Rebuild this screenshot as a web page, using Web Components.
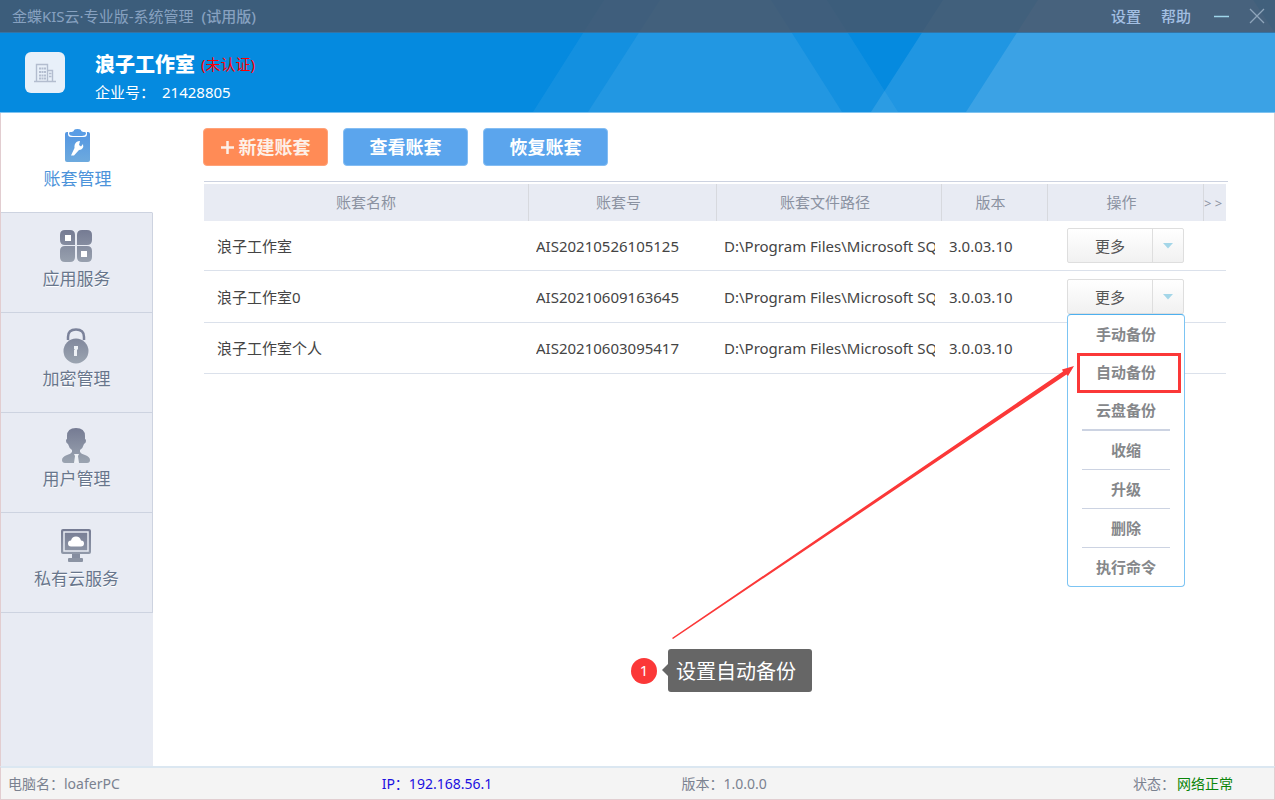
<!DOCTYPE html>
<html lang="zh-CN">
<head>
<meta charset="utf-8">
<title>金蝶KIS云·专业版-系统管理</title>
<style>
html, body { margin: 0; height: 100%; }
body { font-family: "Noto Sans", "Noto Sans CJK SC", sans-serif; font-size: 15px; line-height: 20px; color: #444; background: #fff; }
</style>
</head>
<body>
<app-window>
  <top-banner slot="top" company="浪子工作室" state="(未认证)" code="21428805">
    <title-bar slot="title"></title-bar>
  </top-banner>
  <side-nav slot="side">
    <nav-item active>
      <svg slot="icon" width="26" height="34" viewBox="0 0 26 34" aria-hidden="true">
        <defs><linearGradient id="b" x2="0" y2="1"><stop stop-color="#5496e2"/><stop offset="1" stop-color="#6daade"/></linearGradient></defs>
        <rect y="3" width="25" height="30" rx="2" fill="url(#b)"/>
        <path d="M3 2h19v3q0 3-3 3H6q-3 0-3-3z" fill="#fff"/>
        <path d="M5 3q4 0 4-2 1-1 3.500-1t3.500 1q0 2 4 2 1 0 1 2-1 2-4 2H8Q5 7 4 5q0-2 1-2z" fill="#5a9de5"/>
        <path d="M15 12l-1 4 2 1.500 2-2.500q1 3-1 5-1.500 1-3 1L9 26.500H6L9.500 19q-.5-4 2-6 1.500-1 3.500-1z" fill="#fff"/>
      </svg>账套管理</nav-item>
    <nav-item>
      <svg slot="icon" width="32" height="32" viewBox="0 0 32 32" aria-hidden="true">
        <defs><linearGradient id="g" gradientUnits="userSpaceOnUse" x1="0" y1="0" x2="0" y2="34"><stop stop-color="#757b93"/><stop offset="1" stop-color="#9aa3b0"/></linearGradient></defs>
        <g fill="url(#g)" fill-rule="evenodd">
          <path d="M5 0h5q5 0 5 5v10H5q-5 0-5-5V5q0-5 5-5zM5 5v6h6V5z"/>
          <path d="M22 0h5q5 0 5 5v5q0 5-5 5H17V5q0-5 5-5z"/>
          <path d="M5 16h10v11q0 5-5 5H5q-5 0-5-5v-6q0-5 5-5z"/>
          <path d="M17 16h10q5 0 5 5v6q0 5-5 5h-5q-5 0-5-5zM21 21v6h6v-6z"/>
        </g>
        <path d="M5 5h6v6H5zM21 21h6v6h-6z" fill="#fff"/>
      </svg>应用服务</nav-item>
    <nav-item>
      <svg slot="icon" width="26" height="36" viewBox="0 0 26 36" aria-hidden="true">
        <path d="M5 12V9Q5 1.500 13 1.500T21 9v3" fill="none" stroke="#7b829a" stroke-width="2.500"/>
        <circle cx="13" cy="23" r="12.500" fill="url(#g)"/>
        <path d="M11 18h4v3l-1 1v6h-3v-6h1l-1-1z" fill="#eef1f6"/>
      </svg>加密管理</nav-item>
    <nav-item>
      <svg slot="icon" width="28" height="36" viewBox="0 0 28 36" aria-hidden="true">
        <path d="M14 0q9 0 9 8v3q1 0 1 2t-2 3q-1 4-4 6v2q1 2 5 3 5 2 5 5 0 3-3 3H3q-3 0-3-3 0-3 5-5 4-1 5-3v-2q-3-2-4-6-2-1-2-3t1-2V8q0-8 9-8z" fill="url(#g)"/>
        <path d="M12 26h5l-1 2 1 7h-5l1-7z" fill="#eef1f6"/>
      </svg>用户管理</nav-item>
    <nav-item>
      <svg slot="icon" width="30" height="34" viewBox="0 0 30 34" aria-hidden="true">
        <rect width="30" height="25" rx="2" fill="url(#g)"/>
        <rect x="3" y="3" width="24" height="19" fill="none" stroke="#e8ebf3" stroke-width="1.500"/>
        <path d="M10 17.500q-3 0-3-3t3-3q1-4 5-4t5 4q3 0 3 3t-3 3z" fill="#fff"/>
        <path d="M11 25h8v4h-8z" fill="#858d9f"/><rect x="7" y="29" width="15" height="4" rx="1" fill="#8b93a3"/>
      </svg>私有云服务</nav-item>
  </side-nav>
  <account-panel slot="main"></account-panel>
  <status-bar slot="foot"></status-bar>
</app-window>

<script>
const define = (name, html, init) => {
  const t = document.createElement('template');
  t.innerHTML = html;
  customElements.define(name, class extends HTMLElement {
    constructor() {
      super();
      this.attachShadow({ mode: 'open' }).append(t.content.cloneNode(true));
    }
    connectedCallback() { if (init) init(this, this.shadowRoot); }
  });
};
const RESET = '*{box-sizing:border-box} button{font:inherit;color:inherit;margin:0;padding:0;border:0;background:none;cursor:pointer}';

define('app-window', `<style>${RESET}
  :host{display:flex;flex-direction:column;min-height:100vh;background:#fff;box-sizing:border-box}
  .body{flex:1;display:flex;border:solid #e2cdd0;border-width:0 1px}
  main{flex:1;min-width:0;display:flex}
</style>
<slot name="top"></slot>
<div class="body"><slot name="side"></slot><main><slot name="main"></slot></main></div>
<slot name="foot"></slot>`);

define('title-bar', `<style>${RESET}
  :host{display:flex;align-items:center;height:33px;padding:0 10px 0 12px;box-sizing:border-box;background:rgba(75,81,96,.79);border-bottom:1px solid #3673a3;color:#87a1c0}
  .name{flex:1;white-space:nowrap} b{font-weight:500;margin-left:8px}
  nav{display:flex;align-items:center;gap:20px;color:#a3bfe2;font-weight:500}
  svg{display:block} .min{margin-left:3px}
</style>
<div class="name">金蝶KIS云·专业版-系统管理<b>(试用版)</b></div>
<nav><button>设置</button><button>帮助</button>
<button class="min" aria-label="最小化"><svg width="15" height="16"><path d="M0 8.500h15" stroke="#9fd6ea" stroke-width="1.500"/></svg></button>
<button aria-label="关闭"><svg width="16" height="16"><path d="M1 1l14 14M15 1L1 15" stroke="#8fa5bb" stroke-width="1.300"/></svg></button></nav>`);

define('top-banner', `<style>${RESET}
  :host{display:block;position:relative;background:#058adf;border-bottom:1px solid #7fc3f0}
  .deco{position:absolute;inset:0;width:100%;height:100%}
  .over{position:relative}
  .row{display:flex;gap:30px;height:79px;padding:19px 25px 0;color:#fff}
  .logo{width:40px;height:41px;border-radius:6px;background:#e8f0f9;display:grid;place-items:center}
  h1{margin:0;font-size:20px;line-height:26px;font-weight:700;display:flex;gap:6px;align-items:center}
  h1 span{font-size:15px;line-height:20px;font-weight:400;color:#f00;padding-bottom:2px}
  p{margin:4px 0 0;line-height:20px} p span{margin-left:7px}
</style>
<svg class="deco" viewBox="0 0 1275 112" preserveAspectRatio="xMaxYMid slice" fill="#fff" aria-hidden="true">
  <path d="M604 0H827L898 112H533z" fill-opacity=".06"/>
  <path d="M660 0H771L842 112H588z" fill-opacity=".065"/>
  <path d="M943 0H1275V112H871z" fill-opacity=".11"/>
  <path d="M1038 0H1253L1275 33V112H966z" fill-opacity=".12"/>
</svg>
<div class="over"><slot name="title"></slot>
<div class="row"><div class="logo"><svg width="22" height="20" viewBox="0 0 22 20" fill="none" stroke="#b3bdcf" aria-hidden="true">
  <path d="M2.500 18V1.500h11V18M13.500 7.500h5V18M0 18.500h22" stroke-width="1.400"/>
  <path d="M5 5.500h7M5 9h7M5 12.500h7M5 15.500h7" stroke-width="2" stroke-dasharray="2 .5"/>
  <path d="M15 10.500h2.500M15 13.500h2.500" stroke-width="1.500"/></svg></div>
<div><h1><b id="c"></b><span id="s"></span></h1><p>企业号：<span id="n"></span></p></div></div></div>`,
(el, r) => {
  r.getElementById('c').textContent = el.getAttribute('company');
  r.getElementById('s').textContent = el.getAttribute('state');
  r.getElementById('n').textContent = el.getAttribute('code');
});

define('side-nav', `<style>:host{display:block;width:152px;flex:none;background:#e8ebf3}</style><nav><slot></slot></nav>`);

define('nav-item', `<style>${RESET}
  :host{display:block}
  a{display:flex;flex-direction:column;align-items:center;height:100px;padding-top:13px;border:solid #cdd3e0;border-width:0 1px 1px 0;background:#e8ebf3;color:#68768c;font-size:17px;line-height:24px;text-decoration:none;text-shadow:0 1px #fff}
  .i{height:40px;display:flex;align-items:center;margin-bottom:1px;padding-right:2px}
  :host([active]) a{background:#fff;color:#4c93da;border-right-color:#fff;padding-left:2px}
  :host([active]) .i{padding-right:0}
</style><a href="#"><span class="i"><slot name="icon"></slot></span><span><slot></slot></span></a>`);

define('kis-button', `<style>${RESET}
  :host{display:block}
  button{width:125px;height:38px;border-radius:4px;background:#5ba5ed;border:1px solid #84bdf3;color:#fff;font-size:18px;font-weight:700;line-height:24px;display:flex;align-items:center;justify-content:center;gap:5px}
  :host([primary]) button{background:#ff8b56;border-color:#ffa279;color:#fdf0e8}
  svg{display:none} :host([primary]) svg{display:block}
</style><button><svg width="13" height="13" aria-hidden="true"><path d="M6.500 0v13M0 6.500h13" stroke="#fdf0e8" stroke-width="2.500"/></svg><slot></slot></button>`);

define('split-button', `<style>${RESET}
  :host{display:block;position:relative;width:117px}
  .g{display:flex;height:35px;border:1px solid #dedede;border-radius:2px;background:linear-gradient(#fff,#f1f1f1)}
  .m{flex:1;color:#555;line-height:20px} .d{width:31px;border-left:1px solid #dedede;display:grid;place-items:center}
  ::slotted(*){position:absolute;top:35px;left:0;z-index:2}
</style><div class="g"><button class="m">更多</button><button class="d" aria-label="展开"><svg width="10" height="6"><path d="M0 0h10L5 5.500z" fill="#a4d6e8"/></svg></button></div><slot></slot>`);

define('action-menu', `<style>${RESET}
  :host{display:block;width:118px;border:1px solid #7cc4f3;border-top-color:#4db0ef;border-radius:4px;background:#fff;box-sizing:border-box}
  ul{list-style:none;margin:0;padding:0 14px}
  li{position:relative}
  button{display:block;width:100%;height:38px;font-weight:700;color:#85878a;line-height:20px;white-space:nowrap}
  .sep{border-bottom:1px solid #ccd3e2} .group{border-bottom:2px solid #ccd3e2}
  .mark::after{content:"";position:absolute;inset:0 -11px -2px -5px;border:3px solid #fb3838;pointer-events:none}
</style><ul><li><button>手动备份</button></li><li class="mark"><button>自动备份</button></li><li class="group"><button>云盘备份</button></li>
<li class="sep"><button>收缩</button></li><li class="sep"><button>升级</button></li><li class="sep"><button>删除</button></li><li><button>执行命令</button></li></ul>`);

define('step-callout', `<style>${RESET}
  :host{display:block;width:443px;height:326px;pointer-events:none}
  svg{position:absolute;inset:0}
  .c{position:absolute;left:0;bottom:0;display:flex;align-items:center;gap:11px;color:#fff}
  .n{width:26px;height:26px;border-radius:50%;background:#fb3838;text-align:center;line-height:24px}
  .t{position:relative;background:#666;border-radius:3px;padding:10px 16px 7px 8px;font-size:20px;line-height:26px;white-space:nowrap}
  .t::before{content:"";position:absolute;left:-6px;top:15px;border:6px solid transparent;border-left:0;border-right-color:#666}
</style><svg width="443" height="326" aria-hidden="true"><path d="M41 272L432 5.500l-1-2 12-3.500-6 10-1.500-1.500L42 273z" fill="#fb3838"/></svg>
<div class="c"><span class="n">1</span><span class="t"><slot></slot></span></div>`);

define('account-table', `<style>${RESET}
  :host{display:block;border-top:1px solid #ccd2e0;padding:2px 2px 0 0}
  table{width:100%;table-layout:fixed;border-collapse:separate;border-spacing:0}
  th{height:37px;padding:0 8px 2px 0;background:#e8ebf3;color:#8b92a1;font-weight:400;border-right:1px solid #d7d9de;white-space:nowrap}
  th:first-child{padding:0 0 2px} th:last-child{font-size:13px;padding:0;border:0;text-align:left}
  td{height:51px;padding:0 7px;border-bottom:1px solid #dbe1eb;color:#444}
  tr:nth-child(1) td{height:50px} tr:nth-child(2) td{height:52px}
  td:first-child{padding-left:13px} td:nth-child(5){padding:0 0 0 19px}
  td span{display:block;overflow:hidden;white-space:nowrap}
</style><table><colgroup><col><col style="width:188px"><col style="width:225px"><col style="width:106px"><col style="width:156px"><col style="width:22px"></colgroup>
<thead><tr><th>账套名称</th><th>账套号</th><th>账套文件路径</th><th>版本</th><th>操作</th><th>&gt; &gt;</th></tr></thead><tbody></tbody></table>`,
(el, r) => {
  const rows = [['浪子工作室', 'AIS20210526105125'], ['浪子工作室0', 'AIS20210609163645', true], ['浪子工作室个人', 'AIS20210603095417', false, true]];
  r.querySelector('tbody').innerHTML = rows.map(([name, id, open, covered]) =>
    `<tr><td><span>${name}</span></td><td><span>${id}</span></td><td><span>D:\\Program Files\\Microsoft SQ</span></td><td><span>3.0.03.10</span></td><td>${covered ? '' : `<split-button>${open ? '<action-menu></action-menu>' : ''}</split-button>`}</td><td></td></tr>`).join('');
});

define('account-panel', `<style>${RESET}
  :host{display:block;flex:1;min-width:0;position:relative;padding:15px 46px 0 50px}
  .tools{display:flex;gap:15px;margin-bottom:15px}
  account-table{margin-left:1px}
  step-callout{position:absolute;top:253px;right:200px;z-index:3}
</style><div class="tools"><kis-button primary>新建账套</kis-button><kis-button>查看账套</kis-button><kis-button>恢复账套</kis-button></div>
<account-table></account-table><step-callout>设置自动备份</step-callout>`);

define('status-bar', `<style>${RESET}
  :host{display:grid;grid-template-columns:374fr 300fr 452fr auto;height:34px;align-items:center;padding:0 41px 0 7px;box-sizing:border-box;background:#f4f4f4;border:1px solid #e2cdd0;border-top:2px solid #dbe7f1;font-size:14px;color:#7b8290;white-space:nowrap}
  .ip{color:#1b10e0}.ok{color:#0a850a;margin-left:2px}
</style><span>电脑名：loaferPC</span><span class="ip">IP：192.168.56.1</span><span>版本：1.0.0.0</span><span>状态：<span class="ok">网络正常</span></span>`);
</script>
</body>
</html>
